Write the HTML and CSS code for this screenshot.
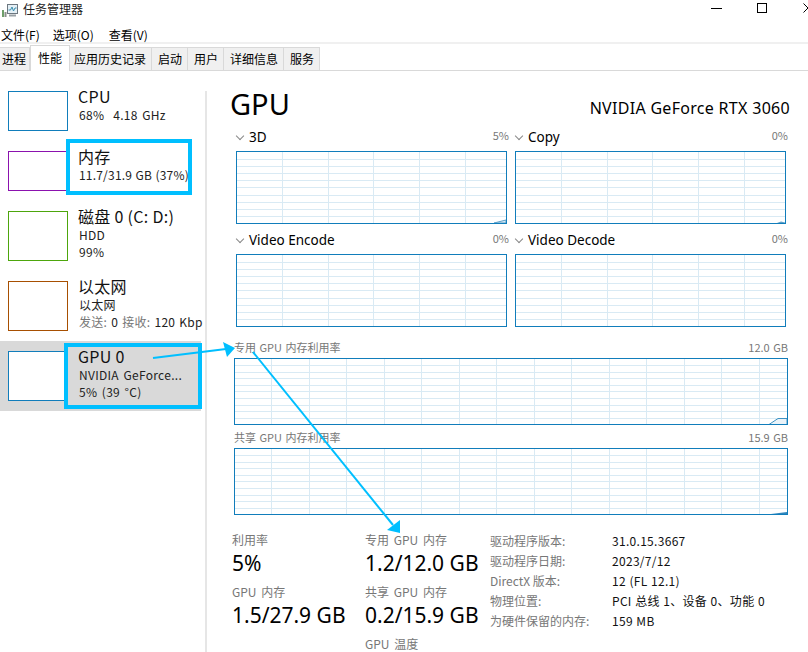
FILE: index.html
```html
<!DOCTYPE html>
<html lang="zh-CN">
<head>
<meta charset="utf-8">
<title>任务管理器</title>
<link rel="stylesheet" href="styles.css">
</head>
<body>
<svg class="defs" width="0" height="0">
  <symbol id="grid-s" viewBox="0 0 269 71">
    <path d="M45.500 0V71M91.500 0V71M136.500 0V71M182.500 0V71M228.500 0V71M0 7.500H269M0 14.500H269M0 21.500H269M0 28.500H269M0 35.500H269M0 43.500H269M0 50.500H269M0 57.500H269M0 64.500H269" fill="none" stroke="#d9eaf4" shape-rendering="crispEdges"/>
  </symbol>
  <symbol id="grid-l" viewBox="0 0 552 65">
    <path d="M36.500 0V65M74.500 0V65M111.500 0V65M149.500 0V65M186.500 0V65M224.500 0V65M261.500 0V65M299.500 0V65M336.500 0V65M374.500 0V65M411.500 0V65M449.500 0V65M486.500 0V65M524.500 0V65M0 6.500H552M0 13.500H552M0 19.500H552M0 26.500H552M0 32.500H552M0 39.500H552M0 46.500H552M0 52.500H552M0 59.500H552" fill="none" stroke="#d9eaf4" shape-rendering="crispEdges"/>
  </symbol>
</svg>
<div class="window">
  <header class="titlebar">
    <svg class="appicon" width="16" height="13" viewBox="0 0 16 13"><rect x="0" y="6" width="2" height="7" fill="#6f9f6a"/><rect x="2.500" y="8" width="2" height="5" fill="#8a8f8a"/><rect x="5.500" y=".5" width="10" height="9" fill="#e4f0f6" stroke="#6d7780"/><path d="M6.500 6h2l1.500-3 1.500 4 1.500-3h1.500" fill="none" stroke="#3a8fb0"/><rect x="7" y="10.500" width="7" height="2" fill="#9aa1a6"/></svg>
    <span class="title">任务管理器</span>
    <div class="controls">
      <svg class="ctl" width="11" height="11" viewBox="0 0 11 11"><path d="M0 5.500h11" stroke="#000"/></svg>
      <svg class="ctl" width="11" height="11" viewBox="0 0 11 11"><rect x=".5" y=".5" width="9" height="9" fill="none" stroke="#000"/></svg>
      <svg class="ctl" width="11" height="11" viewBox="0 0 11 11"><path d="M.5.5l9 9M9.500.5l-9 9" fill="none" stroke="#000"/></svg>
    </div>
  </header>
  <nav class="menubar"><span class="menu-first">文件(F)</span><span>选项(O)</span><span>查看(V)</span></nav>
  <div class="tabs">
    <span class="tab">进程</span><span class="tab active">性能</span><span class="tab">应用历史记录</span><span class="tab">启动</span><span class="tab">用户</span><span class="tab">详细信息</span><span class="tab">服务</span>
  </div>
  <div class="content">
    <aside class="sidebar">
      <div class="item short"><div class="thumb cpu"></div><div class="info"><div class="name">CPU</div><div class="sub">68%&nbsp; 4.18 GHz</div></div></div>
      <div class="item short"><div class="thumb mem"></div><div class="info"><div class="name">内存</div><div class="sub tight">11.7/31.9 GB (37%)</div></div></div>
      <div class="item"><div class="thumb disk"></div><div class="info"><div class="name">磁盘 0 (C: D:)</div><div class="sub">HDD</div><div class="sub">99%</div></div></div>
      <div class="item"><div class="thumb net"></div><div class="info"><div class="name">以太网</div><div class="sub">以太网</div><div class="sub nowrap"><span class="dim">发送:</span> 0 <span class="dim">接收:</span> 120 Kbp</div></div></div>
      <div class="item selected"><div class="thumb gpu"></div><div class="info"><div class="name">GPU 0</div><div class="sub">NVIDIA GeForce...</div><div class="sub">5% (39 °C)</div></div></div>
    </aside>
    <main class="main">
      <div class="heading"><h1>GPU</h1><div class="model">NVIDIA GeForce RTX 3060</div></div>
      <section class="engines">
        <div class="engine">
          <div class="ghead"><span class="chev"></span><span class="gname">3D</span><span class="gval">5%</span></div>
          <div class="plot small"><svg class="lines"><use href="#grid-s"/></svg><svg class="trace" width="12" height="4" viewBox="0 0 12 4"><path d="M0 4L12 1V4Z" fill="#d9eaf4" stroke="#5b9fc8"/></svg></div>
        </div>
        <div class="engine">
          <div class="ghead"><span class="chev"></span><span class="gname">Copy</span><span class="gval">0%</span></div>
          <div class="plot small"><svg class="lines"><use href="#grid-s"/></svg><svg class="trace" width="8" height="2" viewBox="0 0 8 2"><path d="M0 2L4 .5L8 1.500V2Z" fill="#5b9fc8"/></svg></div>
        </div>
        <div class="engine">
          <div class="ghead"><span class="chev"></span><span class="gname">Video Encode</span><span class="gval">0%</span></div>
          <div class="plot small"><svg class="lines"><use href="#grid-s"/></svg></div>
        </div>
        <div class="engine">
          <div class="ghead"><span class="chev"></span><span class="gname">Video Decode</span><span class="gval">0%</span></div>
          <div class="plot small"><svg class="lines"><use href="#grid-s"/></svg></div>
        </div>
      </section>
      <section class="wide">
        <div class="whead"><span>专用 GPU 内存利用率</span><span>12.0 GB</span></div>
        <div class="plot large"><svg class="lines"><use href="#grid-l"/></svg><svg class="trace" width="18" height="6" viewBox="0 0 18 6"><path d="M0 6.500L9 .5H18V6.500Z" fill="#eaf3f9" stroke="#3f93c4"/></svg></div>
        <div class="whead second"><span>共享 GPU 内存利用率</span><span>15.9 GB</span></div>
        <div class="plot large"><svg class="lines"><use href="#grid-l"/></svg><svg class="trace" width="16" height="2" viewBox="0 0 16 2"><path d="M0 2L16 0V2Z" fill="#2f86bd"/></svg></div>
      </section>
      <section class="stats">
        <div class="col first">
          <div class="stat"><div class="label">利用率</div><div class="value">5%</div></div>
          <div class="stat"><div class="label">GPU 内存</div><div class="value">1.5/27.9 GB</div></div>
        </div>
        <div class="col second">
          <div class="stat"><div class="label">专用 GPU 内存</div><div class="value">1.2/12.0 GB</div></div>
          <div class="stat"><div class="label">共享 GPU 内存</div><div class="value">0.2/15.9 GB</div></div>
          <div class="stat"><div class="label">GPU 温度</div></div>
        </div>
        <dl class="props">
          <dt>驱动程序版本:</dt><dd>31.0.15.3667</dd>
          <dt>驱动程序日期:</dt><dd>2023/7/12</dd>
          <dt>DirectX 版本:</dt><dd>12 (FL 12.1)</dd>
          <dt>物理位置:</dt><dd>PCI 总线 1、设备 0、功能 0</dd>
          <dt>为硬件保留的内存:</dt><dd>159 MB</dd>
        </dl>
      </section>
    </main>
  </div>
  <svg class="notes" width="808" height="652" viewBox="0 0 808 652">
    <g fill="none" stroke="#00bfff" stroke-width="4">
      <rect x="68" y="141" width="122" height="52"/>
      <rect x="66" y="345" width="134" height="62"/>
    </g>
    <g stroke="#00bfff" stroke-width="2" fill="#00bfff">
      <path d="M153 358L226 349" fill="none"/>
      <path d="M235 348L223 342L227 357Z" stroke="none"/>
      <path d="M253 352L393 525" fill="none"/>
      <path d="M400 533L387 530L400 520Z" stroke="none"/>
    </g>
  </svg>
</div>
</body>
</html>
```

FILE: styles.css
```css
* { box-sizing: border-box; margin: 0; padding: 0; }
html, body { width: 808px; height: 652px; overflow: hidden; background: #fff; }
body { font-family: "Noto Sans CJK SC", "Noto Sans", sans-serif; color: #000; font-size: 12px; }
.defs { position: absolute; }
.window { position: relative; width: 808px; height: 652px; overflow: hidden; }

.titlebar { height: 18px; display: flex; align-items: center; padding-left: 2px; }
.appicon { margin-top: 3px; }
.title { margin-left: 5px; font-size: 12px; line-height: 18px; color: #222; }
.controls { margin-left: auto; display: flex; gap: 35px; margin-right: -6px; }
.ctl { display: block; margin-top: -2px; }

.menubar { display: flex; align-items: center; gap: 15px; padding: 9px 0 0 1px; border-bottom: 2px solid #f0f0f0; height: 26px; line-height: 16px; }
.menu-first { margin-right: -2px; }

.tabs { height: 27px; display: flex; align-items: flex-end; border-bottom: 1px solid #d9d9d9; padding-top: 1px; }
.tab { height: 23px; line-height: 21px; padding: 0 5px 0 6px; background: #f0f0f0; border: 1px solid #d9d9d9; border-bottom: 0; border-left: 0; }
.tab:first-child { padding: 0 3px 0 2px; }
.tab:nth-child(3) { padding: 0 5px 0 4px; }
.tab.active { height: 26px; line-height: 24px; background: #fff; padding: 0 7px; border-left: 1px solid #d9d9d9; margin-bottom: -1px; position: relative; }

.content { display: flex; height: 581px; }
.sidebar { width: 207px; flex: none; margin-top: 20px; border-right: 2px solid #e6e6e6; height: 561px; }
.item { height: 70px; display: flex; width: 201px; padding: 10px 0 0 8px; }
.item.short { height: 60px; }
.item:first-child { margin-top: -10px; height: 60px; }
.item.selected { background: #d9d9d9; }
.thumb { width: 60px; height: 50px; border: 1px solid #117dbb; background: #fff; flex: none; }
.short .thumb { height: 40px; }
.thumb.mem { border-color: #8b12ae; }
.thumb.disk { border-color: #4da60c; }
.thumb.net { border-color: #a74f01; }
.info { margin-left: 10px; margin-top: -4px; white-space: nowrap; }
.name { font-size: 16px; line-height: 19px; color: #111; letter-spacing: .3px; }
.sub { font-size: 12px; line-height: 17px; color: #222; margin-left: 1px; letter-spacing: .3px; word-spacing: 1.500px; }
.sub.nowrap { word-spacing: 1px; }
.sub.tight { letter-spacing: .2px; word-spacing: .5px; }
.dim { color: #777; }

.main { flex: 1; min-width: 0; padding-left: 24px; }
.heading { display: flex; align-items: flex-end; height: 57px; padding-right: 18px; padding-top: 8px; }
h1 { font-size: 29px; font-weight: 400; line-height: 40px; font-family: "Noto Sans", sans-serif; margin-bottom: 4px; margin-left: -1px; }
.model { margin-left: auto; font-size: 16px; line-height: 22px; margin-bottom: 9px; font-family: "Noto Sans", sans-serif; letter-spacing: .3px; }

.engines { display: grid; grid-template-columns: 271px 271px; column-gap: 8px; row-gap: 7px; margin-left: 5px; }
.ghead { display: flex; align-items: center; height: 23px; }
.chev { width: 6px; height: 6px; border-right: 1px solid #888; border-bottom: 1px solid #888; transform: rotate(45deg); margin: -8px 4px 0 1px; }
.gname { font-size: 13.500px; line-height: 20px; margin-left: 2px; margin-top: -5px; font-family: "Noto Sans", sans-serif; }
.gval { margin-left: auto; font-size: 11px; color: #777; margin-right: -2px; margin-top: -9px; }

.plot { position: relative; border: 1px solid #117dbb; background: #fff; }
.plot.small { height: 73px; }
.plot.large { height: 67px; width: 554px; }
.lines { display: block; width: 100%; height: 100%; }
.trace { position: absolute; right: 0; bottom: 0; display: block; }

.wide { margin-left: 3px; width: 554px; margin-top: 9px; }
.whead { display: flex; justify-content: space-between; align-items: center; height: 22px; color: #777; font-size: 11px; word-spacing: 1px; }
.whead.second { height: 23px; }

.stats { display: flex; margin-top: 16px; margin-left: 1px; }
.col { flex: none; }
.col.first { width: 133px; }
.col.second { width: 125px; }
.stat { height: 52px; }
.label { font-size: 12px; line-height: 18px; color: #777; word-spacing: 2px; }
.value { font-size: 21px; line-height: 28px; font-family: "Noto Sans", sans-serif; }
.props { display: grid; grid-template-columns: 122px auto; grid-auto-rows: 20px; line-height: 20px; }
dt { color: #777; }
dd { color: #111; letter-spacing: .3px; word-spacing: .5px; }

.notes { position: absolute; left: 0; top: 0; pointer-events: none; }
```
